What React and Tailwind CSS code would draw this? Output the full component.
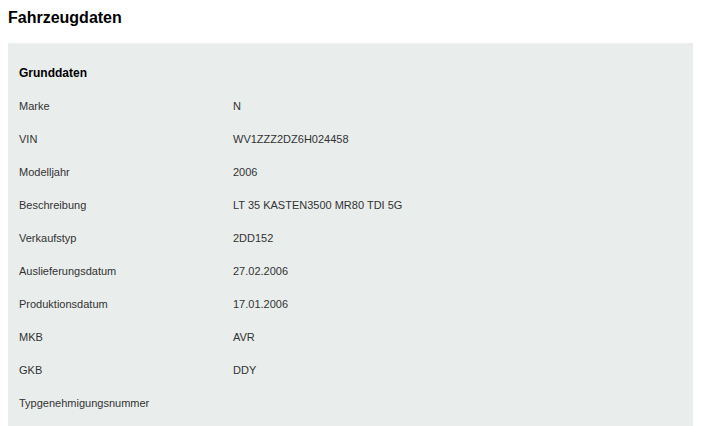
const rows = [
  { label: "Marke", value: "N" },
  { label: "VIN", value: "WV1ZZZ2DZ6H024458" },
  { label: "Modelljahr", value: "2006" },
  { label: "Beschreibung", value: "LT 35 KASTEN3500 MR80 TDI 5G" },
  { label: "Verkaufstyp", value: "2DD152" },
  { label: "Auslieferungsdatum", value: "27.02.2006" },
  { label: "Produktionsdatum", value: "17.01.2006" },
  { label: "MKB", value: "AVR" },
  { label: "GKB", value: "DDY" },
  { label: "Typgenehmigungsnummer", value: "" },
];

export default function App() {
  return (
    <div className="min-h-screen bg-white px-2 pt-[6px] font-['Liberation_Sans',Arial,sans-serif] text-[#333333]">
      <h1 className="text-[16px] font-bold leading-[24px] text-black">Fahrzeugdaten</h1>

      <div className="mt-[13px] w-[685px] bg-[#e9edec] px-[11px] pt-[14px] pb-[14px]">
        <div className="h-[33px] text-[12px] font-bold leading-[33px] text-black">Grunddaten</div>
        {rows.map((row) => (
          <div key={row.label} className="flex h-[33px] text-[11px] leading-[33px]">
            <div className="w-[214px] shrink-0">{row.label}</div>
            <div>{row.value}</div>
          </div>
        ))}
      </div>
    </div>
  );
}
